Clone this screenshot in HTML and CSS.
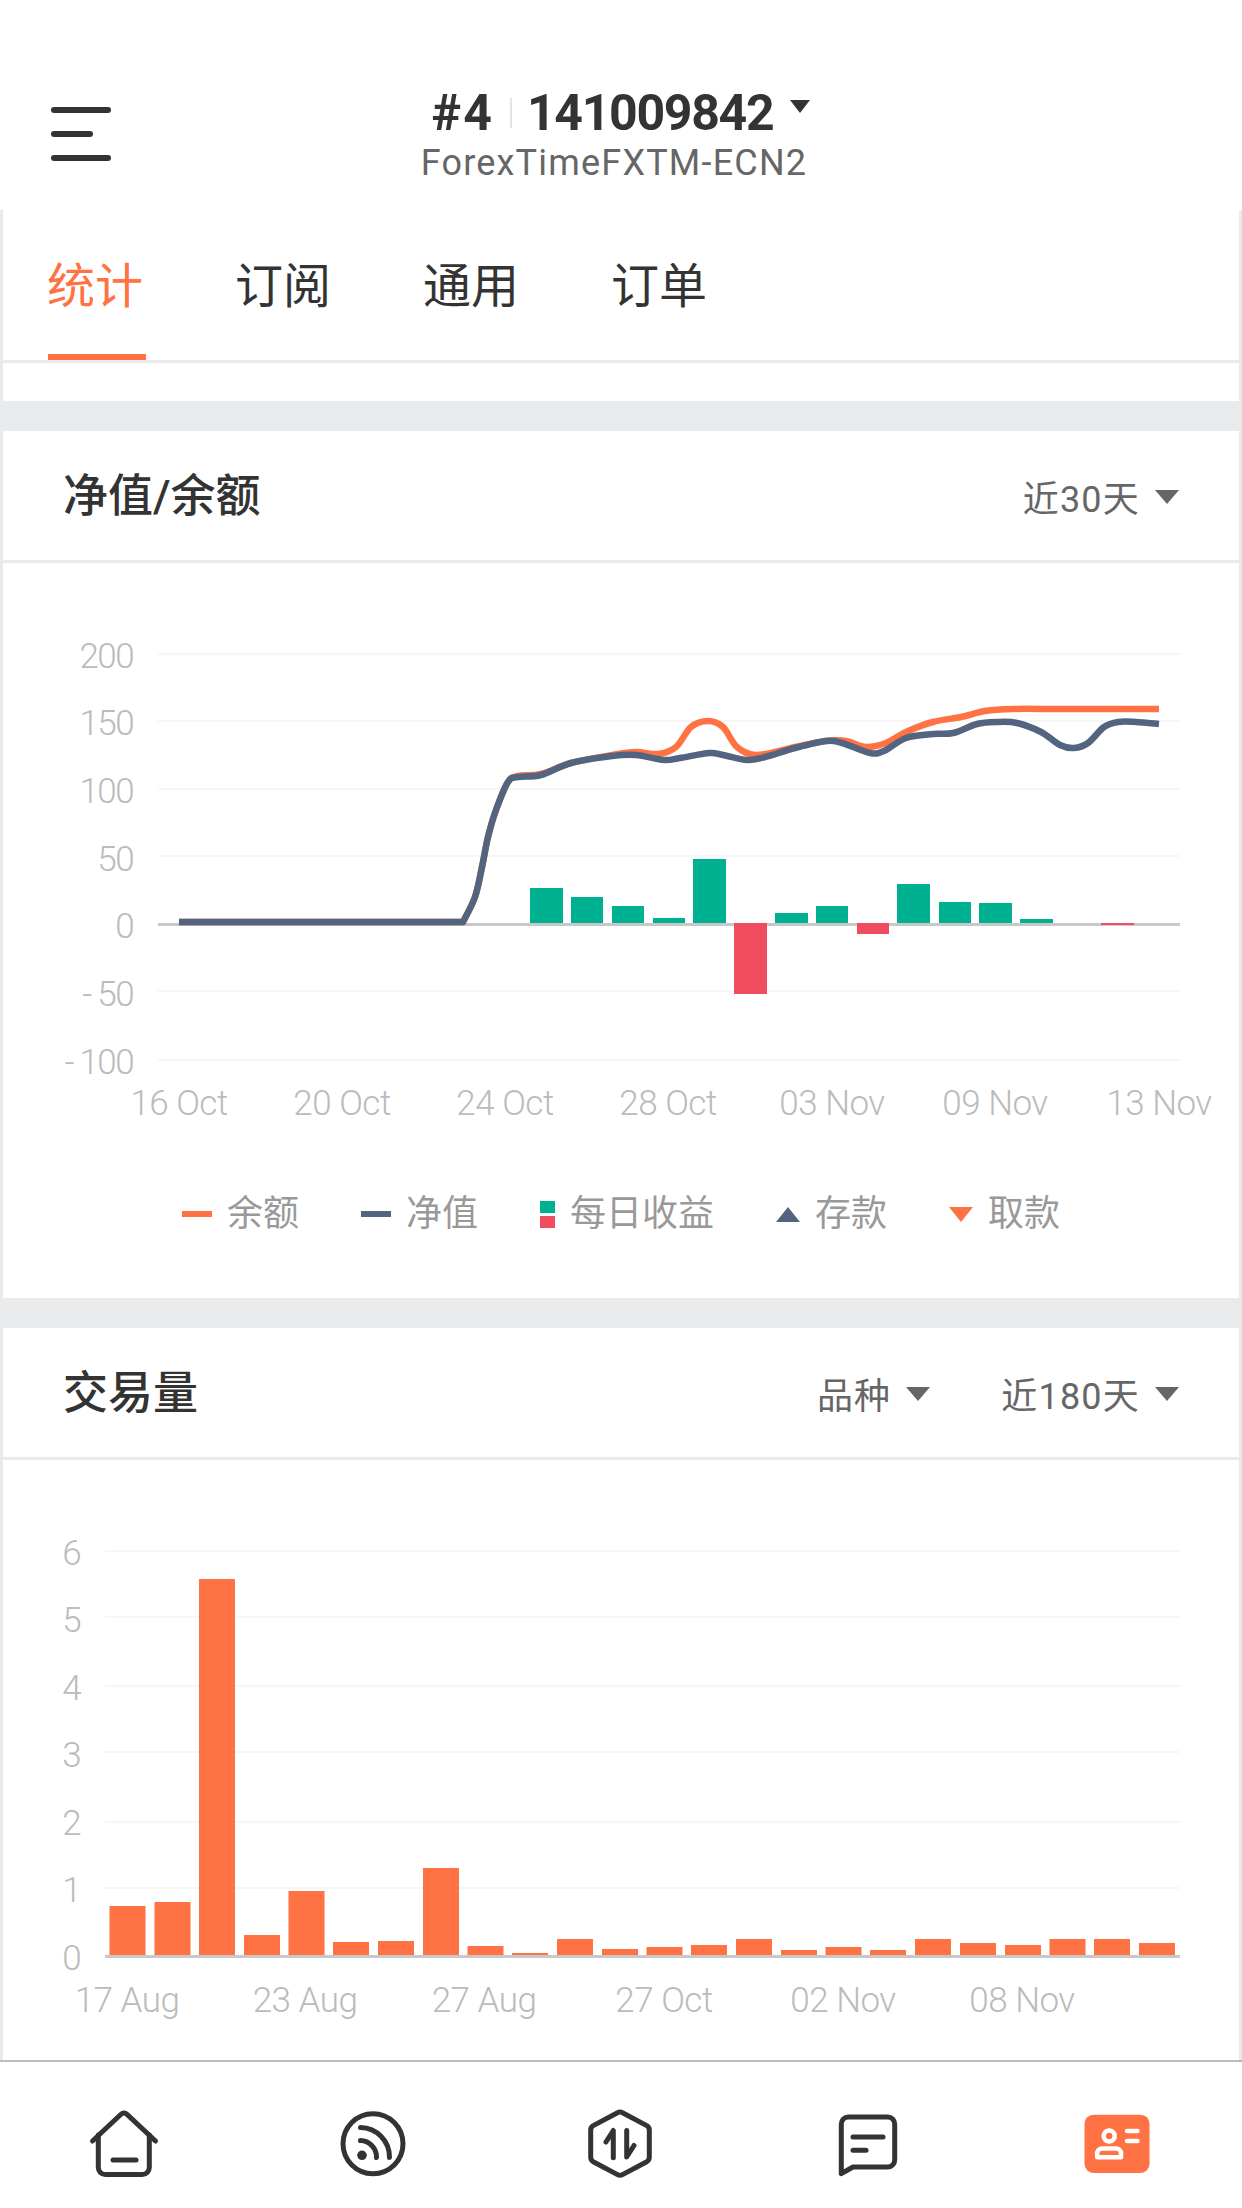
FILE: index.html
```html
<!DOCTYPE html>
<html lang="zh-CN">

<head>
  <meta charset="utf-8">
  <title>账户统计</title>
  <link rel="stylesheet" href="styles.css">
</head>

<body>
  <header class="topbar">
    <div class="menu-btn"><span></span><span class="short"></span><span></span></div>
    <div class="account">
      <div class="account-line">
        <span class="account-no">#4</span>
        <i class="account-sep"></i>
        <span>141009842</span>
        <i class="account-caret"></i>
      </div>
      <div class="account-server">ForexTimeFXTM-ECN2</div>
    </div>
  </header>

  <main class="content">
    <nav class="tabs">
      <a class="tab active">统计</a>
      <a class="tab">订阅</a>
      <a class="tab">通用</a>
      <a class="tab">订单</a>
    </nav>
    <div class="spacer"></div>
    <div class="band"></div>

    <section>
      <div class="card-head">
        <h2>净值/余额</h2>
        <div class="filters">
          <span class="filter">近30天<i class="caret"></i></span>
        </div>
      </div>
      <!-- y = 924 is zero, one grid step is 67.6 -->
      <svg class="chart" width="1236" height="577" viewBox="3 563 1236 577">
        <g class="grid">
          <rect x="158" y="653" width="1022" height="2" />
          <rect x="158" y="720" width="1022" height="2" />
          <rect x="158" y="788" width="1022" height="2" />
          <rect x="158" y="855" width="1022" height="2" />
          <rect x="158" y="990" width="1022" height="2" />
          <rect x="158" y="1059" width="1022" height="2" />
        </g>
        <rect class="baseline" x="158" y="923" width="1022" height="3" />
        <g class="axis-y">
          <text x="133" y="668">200</text>
          <text x="133" y="735">150</text>
          <text x="133" y="803">100</text>
          <text x="133" y="871">50</text>
          <text x="133" y="938">0</text>
          <text x="133" y="1006"><tspan class="minus">-</tspan>50</text>
          <text x="133" y="1074"><tspan class="minus">-</tspan>100</text>
        </g>
        <g class="axis-x">
          <text x="179" y="1115">16 Oct</text>
          <text x="342" y="1115">20 Oct</text>
          <text x="505" y="1115">24 Oct</text>
          <text x="668" y="1115">28 Oct</text>
          <text x="832" y="1115">03 Nov</text>
          <text x="995" y="1115">09 Nov</text>
          <text x="1159" y="1115">13 Nov</text>
        </g>
        <g class="bar-up">
          <rect x="530" y="888" width="33" height="35" />
          <rect x="571" y="897" width="32" height="26" />
          <rect x="612" y="906" width="32" height="17" />
          <rect x="653" y="918" width="32" height="5" />
          <rect x="693" y="859" width="33" height="64" />
          <rect x="775" y="913" width="33" height="10" />
          <rect x="816" y="906" width="32" height="17" />
          <rect x="897" y="884" width="33" height="39" />
          <rect x="939" y="902" width="32" height="21" />
          <rect x="979" y="903" width="33" height="20" />
          <rect x="1020" y="919" width="33" height="4" />
        </g>
        <g class="bar-down">
          <rect x="734" y="923" width="33" height="71" />
          <rect x="857" y="923" width="32" height="11" />
          <rect x="1101" y="923" width="33" height="2" />
        </g>
        <path id="balanceLine" class="line line-balance" />
        <path id="equityLine" class="line line-equity" />
      </svg>
      <ul class="legend">
        <li><i class="mark-line orange"></i>余额</li>
        <li><i class="mark-line navy"></i>净值</li>
        <li><i class="mark-split"><b></b><b></b></i>每日收益</li>
        <li><i class="mark-up"></i>存款</li>
        <li><i class="mark-down"></i>取款</li>
      </ul>
    </section>

    <div class="band"></div>

    <section>
      <div class="card-head">
        <h2>交易量</h2>
        <div class="filters">
          <span class="filter">品种<i class="caret"></i></span>
          <span class="filter">近180天<i class="caret"></i></span>
        </div>
      </div>
      <svg class="chart" width="1236" height="600" viewBox="3 1460 1236 600">
        <g class="grid">
          <rect x="105" y="1550" width="1075" height="2" />
          <rect x="105" y="1616" width="1075" height="2" />
          <rect x="105" y="1685" width="1075" height="2" />
          <rect x="105" y="1751" width="1075" height="2" />
          <rect x="105" y="1821" width="1075" height="2" />
          <rect x="105" y="1887" width="1075" height="2" />
        </g>
        <g class="axis-y">
          <text x="80" y="1565">6</text>
          <text x="80" y="1632">5</text>
          <text x="80" y="1700">4</text>
          <text x="80" y="1767">3</text>
          <text x="80" y="1835">2</text>
          <text x="80" y="1902">1</text>
          <text x="80" y="1970">0</text>
        </g>
        <g class="axis-x">
          <text x="127" y="2012">17 Aug</text>
          <text x="305" y="2012">23 Aug</text>
          <text x="484" y="2012">27 Aug</text>
          <text x="664" y="2012">27 Oct</text>
          <text x="843" y="2012">02 Nov</text>
          <text x="1022" y="2012">08 Nov</text>
        </g>
        <g class="bar-volume">
          <rect x="109.5" y="1906" width="36" height="49" />
          <rect x="154.5" y="1902" width="36" height="53" />
          <rect x="199" y="1579" width="36" height="376" />
          <rect x="244" y="1935" width="36" height="20" />
          <rect x="288.5" y="1891" width="36" height="64" />
          <rect x="333" y="1942" width="36" height="13" />
          <rect x="378" y="1941" width="36" height="14" />
          <rect x="423" y="1868" width="36" height="87" />
          <rect x="467.5" y="1946" width="36" height="9" />
          <rect x="512" y="1953" width="36" height="2" />
          <rect x="557" y="1939" width="36" height="16" />
          <rect x="602" y="1949" width="36" height="6" />
          <rect x="646.5" y="1947" width="36" height="8" />
          <rect x="691" y="1945" width="36" height="10" />
          <rect x="736" y="1939" width="36" height="16" />
          <rect x="781" y="1950" width="36" height="5" />
          <rect x="825.5" y="1947" width="36" height="8" />
          <rect x="870" y="1950" width="36" height="5" />
          <rect x="915" y="1939" width="36" height="16" />
          <rect x="960" y="1943" width="36" height="12" />
          <rect x="1005" y="1945" width="36" height="10" />
          <rect x="1049.5" y="1939" width="36" height="16" />
          <rect x="1094" y="1939" width="36" height="16" />
          <rect x="1139" y="1943" width="36" height="12" />
        </g>
        <rect class="baseline" x="105" y="1955" width="1075" height="3" />
      </svg>
    </section>
  </main>

  <footer class="tabbar">
    <a class="tabbar-item">
      <svg class="nav-icon" viewBox="0 0 72 72">
        <path d="M4.5 34 33 7.3a4.4 4.4 0 0 1 6 0L67.5 34" />
        <path d="M10.3 28V60.5a7 7 0 0 0 7 7H54.3a7 7 0 0 0 7-7V28" />
        <path d="M25 53H48" />
      </svg>
    </a>
    <a class="tabbar-item">
      <svg class="nav-icon" viewBox="0 0 72 72">
        <circle cx="36" cy="36.7" r="30" />
        <path d="M23.5 20.5A29.5 29.5 0 0 1 52.5 50.5" />
        <path d="M23.5 33.5A16.5 16.5 0 0 1 39.5 50.5" />
        <circle class="solid" cx="25" cy="48.3" r="4.8" />
      </svg>
    </a>
    <a class="tabbar-item">
      <svg class="nav-icon" viewBox="0 0 72 72">
        <path d="M32.5 5.7a5 5 0 0 1 5 0L61.8 18.6a5 5 0 0 1 2.5 4.4V50.300a5 5 0 0 1-2.500 4.400L37.500 67.600a5 5 0 0 1-5 0L8.200 54.700a5 5 0 0 1-2.500-4.400V23a5 5 0 0 1 2.500-4.400Z" />
        <path d="M21 35 28.300 23.500V50.700" />
        <path d="M41.700 23.500V50 L49 38.500" />
      </svg>
    </a>
    <a class="tabbar-item">
      <svg class="nav-icon" viewBox="0 0 72 72">
        <path d="M15.300 10H54.700a7 7 0 0 1 7 7V53a7 7 0 0 1-7 7H20L8.300 66.700V17a7 7 0 0 1 7-7Z" />
        <path d="M20 30H50" />
        <path d="M20 43.300H33" />
      </svg>
    </a>
    <a class="tabbar-item">
      <svg class="nav-icon contact" viewBox="0 0 72 72">
        <rect class="contact-bg" x="2.500" y="7.700" width="65" height="58.300" rx="9" />
        <circle cx="27.200" cy="29" r="5.500" />
        <path d="M15.200 47.500a5 5 0 0 1 5-6H34a5 5 0 0 1 5 6v2.800H15.200Z" />
        <path d="M45 24H55.500" />
        <path d="M45 34H55.500" />
      </svg>
    </a>
  </footer>

  <script src="charts.js"></script>
</body>

</html>
```

FILE: styles.css
```css
* {
  box-sizing: border-box;
}

body {
  margin: 0;
  width: 1242px;
  height: 2208px;
  overflow: hidden;
  background: #fff;
  color: #333;
  font-family: Roboto, "Noto Sans CJK SC", sans-serif;
}

/* top bar */
.topbar {
  display: grid;
  grid-template-columns: 1fr auto 1fr;
  height: 210px;
}

.menu-btn {
  display: flex;
  flex-direction: column;
  gap: 18px;
  width: 60px;
  margin: 107px 0 0 51px;
}

.menu-btn span {
  height: 6px;
  border-radius: 3px;
  background: #333;
}

.menu-btn .short {
  width: 42px;
}

.account {
  display: flex;
  flex-direction: column;
  align-items: center;
  padding-top: 88px;
}

.account-line {
  display: flex;
  align-items: center;
  height: 50px;
  font-size: 50px;
  font-weight: 700;
  line-height: 50px;
  letter-spacing: -1.3px;
}

.account-no {
  letter-spacing: 2px;
}

.account-sep {
  width: 2px;
  height: 30px;
  margin: 0 15px 0 16px;
  background: #e4e4e4;
}

.account-caret {
  margin: -14px 0 0 17px;
  border-top: 13px solid #333;
  border-left: 10px solid transparent;
  border-right: 10px solid transparent;
}

.account-server {
  margin-right: 14px;
  color: #666;
  font-size: 36px;
  line-height: 50px;
  letter-spacing: 1.2px;
}

/* page body */
.content {
  height: 1850px;
  overflow: hidden;
  border-left: 3px solid #e9eaec;
  border-right: 3px solid #e9eaec;
}

.tabs {
  display: flex;
  gap: 90px;
  height: 153px;
  padding-left: 45px;
  border-bottom: 3px solid #e9eaec;
}

.tab {
  width: 98px;
  height: 150px;
  border-bottom: 6px solid transparent;
  font-size: 48px;
  line-height: 154px;
  text-indent: -1px;
  white-space: nowrap;
}

.tab.active {
  border-bottom-color: #ff7243;
  color: #ff7243;
}

.spacer {
  height: 38px;
}

.band {
  height: 30px;
  background: #e9eaec;
}

.card-head {
  display: flex;
  align-items: center;
  justify-content: space-between;
  height: 132px;
  padding: 0 60px;
  border-bottom: 3px solid #e9eaec;
}

.card-head h2 {
  margin: 0 0 7px;
  font-size: 45px;
  font-weight: 500;
}

.filters {
  display: flex;
  gap: 71px;
}

.filter {
  display: flex;
  align-items: center;
  color: #666;
  font-size: 36px;
  letter-spacing: 1.2px;
}

.caret {
  margin: 2px 0 0 15px;
  border-top: 14px solid #666;
  border-left: 12px solid transparent;
  border-right: 12px solid transparent;
}

/* charts */
.chart {
  display: block;
}

.grid rect {
  fill: #f6f6f6;
}

.baseline {
  fill: #c8c8c8;
}

.axis-y text,
.axis-x text {
  fill: #bbb;
  font-size: 35px;
  font-weight: 300;
}

.axis-y text {
  letter-spacing: -1.6px;
  text-anchor: end;
}

.axis-y .minus {
  letter-spacing: 5px;
}

.axis-x text {
  letter-spacing: -0.5px;
  text-anchor: middle;
}

.bar-up rect {
  fill: #00b191;
}

.bar-down rect {
  fill: #f04d60;
}

.bar-volume rect {
  fill: #ff7243;
}

.line {
  fill: none;
  stroke-width: 6.5;
  stroke-linejoin: round;
}

.line-balance {
  stroke: #ff7243;
}

.line-equity {
  stroke: #526480;
}

.legend {
  display: flex;
  justify-content: center;
  gap: 62px;
  height: 109px;
  margin: 49px 0 0;
  padding: 0;
  list-style: none;
  color: #999;
  font-size: 36px;
  line-height: 50px;
}

.legend li {
  display: flex;
  align-items: center;
  gap: 15px;
  height: 50px;
}

.mark-line {
  width: 30px;
  height: 6px;
}

.mark-line.orange {
  background: #ff7243;
}

.mark-line.navy {
  background: #526480;
}

.mark-split {
  display: flex;
  flex-direction: column;
  gap: 3px;
}

.mark-split b {
  width: 15px;
  height: 12px;
  background: #00b191;
}

.mark-split b + b {
  background: #f04d60;
}

.mark-up,
.mark-down {
  border-left: 12px solid transparent;
  border-right: 12px solid transparent;
}

.mark-up {
  border-bottom: 15px solid #526480;
}

.mark-down {
  border-top: 15px solid #ff7243;
}

/* bottom navigation */
.tabbar {
  display: flex;
  height: 148px;
  padding-top: 45px;
  border-top: 2px solid #bbb;
}

.tabbar-item {
  flex: 1;
  display: flex;
  justify-content: center;
}

.nav-icon {
  width: 72px;
  height: 72px;
  fill: none;
  stroke: #333;
  stroke-width: 5;
  stroke-linecap: round;
  stroke-linejoin: round;
}

.nav-icon .solid {
  fill: #333;
  stroke: none;
}

.contact {
  stroke: #fff;
  stroke-width: 4.5;
}

.contact-bg {
  fill: #ff7243;
  stroke: none;
}
```

FILE: charts.js
```js
// balance and equity curves, page coordinates of the chart svg.
// both sit flat on zero from x = 179 to x = 463, the curve starts there
var balance = [[463, 922], [475, 897], [482, 867], [488, 837], [496, 810], [508, 782], [518, 776], [541, 774], [571, 763], [612, 755], [636, 752], [658, 754], [676, 747], [691, 727], [708, 721], [723, 727], [737, 747], [755, 755], [779, 751], [795, 747], [826, 741], [846, 741], [866, 747], [886, 743], [906, 732], [933, 722], [961, 717], [985, 711], [1013, 709], [1056, 709], [1096, 709], [1159, 709]];

var equity = [[463, 922], [475, 897], [482, 867], [488, 837], [496, 810], [508, 782], [518, 777], [541, 775], [571, 763], [612, 756], [636, 755], [664, 760], [680, 758], [709, 753], [723, 755], [747, 760], [765, 757], [795, 748], [826, 741], [842, 743], [870, 753], [884, 751], [906, 738], [933, 734], [953, 733], [977, 724], [997, 722], [1017, 723], [1041, 732], [1060, 745], [1074, 748], [1088, 743], [1104, 727], [1118, 722], [1136, 722], [1159, 724]];

// catmull-rom through the points, written out as beziers
function smoothPath(pts) {
  var d = "M179 922L" + pts[0][0] + " " + pts[0][1];
  for (var i = 0; i < pts.length - 1; i++) {
    var p0 = pts[i - 1] || pts[i];
    var p1 = pts[i];
    var p2 = pts[i + 1];
    var p3 = pts[i + 2] || p2;
    var c1x = p1[0] + (p2[0] - p0[0]) / 6;
    var c1y = p1[1] + (p2[1] - p0[1]) / 6;
    var c2x = p2[0] - (p3[0] - p1[0]) / 6;
    var c2y = p2[1] - (p3[1] - p1[1]) / 6;
    d += "C" + c1x + " " + c1y + " " + c2x + " " + c2y + " " + p2[0] + " " + p2[1];
  }
  return d;
}

document.getElementById("balanceLine").setAttribute("d", smoothPath(balance));
document.getElementById("equityLine").setAttribute("d", smoothPath(equity));
```
